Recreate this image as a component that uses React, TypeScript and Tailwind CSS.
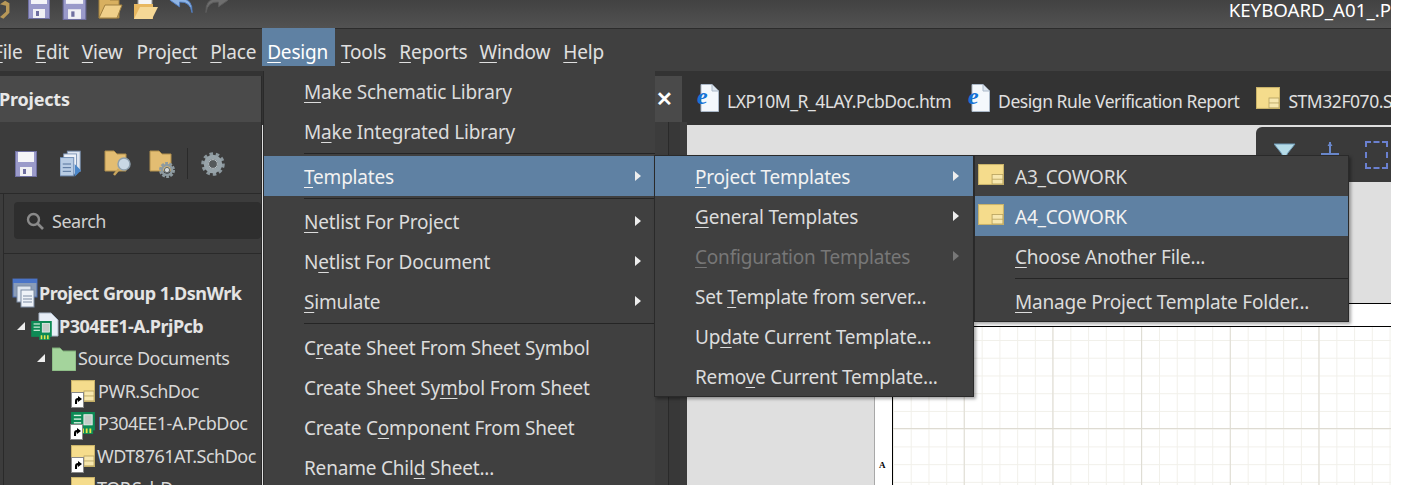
import React from 'react';

const FONT = "font-['Noto_Sans','Noto_Sans_CJK_KR',sans-serif]";

const Floppy = ({ className = '' }: { className?: string }) => (
  <svg viewBox="0 0 22 26" className={className}>
    <rect x="0.5" y="0.5" width="21" height="25" fill="#9a9aca" stroke="#6f6fa0" />
    <rect x="3" y="1" width="16" height="10" fill="#f4f4f8" />
    <rect x="5" y="16" width="12" height="9" fill="#f0f0f4" />
    <rect x="8" y="18" width="3" height="5" fill="#6f6fa0" />
  </svg>
);

const SheetIcon = ({ shortcut = false, size = 'w-[24px] h-[22px]' }: { shortcut?: boolean; size?: string }) => (
  <span className={`relative inline-block shrink-0 ${size}`}>
    <svg viewBox="0 0 24 20" preserveAspectRatio="none" className="w-full h-full">
      <rect x="0.5" y="0.5" width="23" height="19" fill="#f5dc8c" stroke="#c9b36a" />
      <rect x="13" y="10" width="10" height="9" fill="#f7e7ae" stroke="#b8a35f" strokeWidth="0.8" />
      <line x1="13" y1="14.5" x2="23" y2="14.5" stroke="#b8a35f" strokeWidth="0.8" />
    </svg>
    {shortcut && <ShortcutBadge />}
  </span>
);

const ShortcutBadge = () => (
  <span className="absolute left-0 bottom-[-6px] w-[13px] h-[16px] bg-white border border-[#888] flex items-center justify-center">
    <svg viewBox="0 0 10 10" className="w-[10px] h-[10px]">
      <path d="M2 9 L2 6 Q2 3 5 3 L5 1 L9 4 L5 7 L5 5 Q4 5 4 9 Z" fill="#000" />
    </svg>
  </span>
);

const PcbChip = ({ className = '' }: { className?: string }) => (
  <svg viewBox="0 0 26 24" className={className}>
    <rect x="0" y="0" width="26" height="20" fill="#0d8a55" />
    <rect x="3" y="3" width="8" height="1.5" fill="#d8f0e0" />
    <rect x="3" y="7" width="8" height="1.5" fill="#d8f0e0" />
    <rect x="3" y="11" width="8" height="1.5" fill="#d8f0e0" />
    <rect x="14" y="3" width="9" height="11" fill="#c4ccc8" stroke="#e8f0ec" />
    <rect x="10" y="16" width="14" height="8" fill="#0d8a55" />
    <rect x="12" y="18" width="2" height="5" fill="#e6e64a" />
    <rect x="16" y="18" width="2" height="5" fill="#e6e64a" />
    <rect x="20" y="18" width="2" height="5" fill="#e6e64a" />
  </svg>
);

const IeIcon = () => (
  <span className="relative inline-block w-[22px] h-[28px] shrink-0">
    <svg viewBox="0 0 22 28" className="w-full h-full">
      <path d="M4 0.5 H15 L21.5 7 V27.5 H4 Z" fill="#f4f8fc" stroke="#aab8c8" />
      <path d="M15 0.5 V7 H21.5" fill="#dde6f0" stroke="#aab8c8" />
    </svg>
    <span className="absolute left-0 top-[1px] text-[#1573d6] text-[24px] leading-[22px] font-bold font-['Liberation_Serif',serif] italic">e</span>
  </span>
);

const FolderIcon = ({ glass, gear }: { glass?: boolean; gear?: boolean }) => (
  <svg viewBox="0 0 28 30" className="w-[28px] h-[30px]">
    <path d="M1 2 H10 L13 5 H22 V22 H1 Z" fill="#e3bd72" stroke="#b08f4c" />
    {glass && (
      <>
        <circle cx="20" cy="15" r="6" fill="#c9d8e4" stroke="#8ea0ae" strokeWidth="1.5" />
        <line x1="15" y1="20" x2="10" y2="26" stroke="#c9a55c" strokeWidth="2.5" />
      </>
    )}
    {gear && (
      <>
        <circle cx="18" cy="21" r="6" fill="none" stroke="#8d9aa0" strokeWidth="4" strokeDasharray="2.5 1.2" />
        <circle cx="18" cy="21" r="5" fill="none" stroke="#8d9aa0" strokeWidth="2.5" />
        <circle cx="18" cy="21" r="2.6" fill="#d4d8d8" stroke="#5f686c" />
      </>
    )}
  </svg>
);

const Gear = () => (
  <svg viewBox="0 0 24 24" className="w-[24px] h-[24px]">
    <circle cx="12" cy="12" r="10" fill="none" stroke="#8c989e" strokeWidth="3.5" strokeDasharray="3.4 2.8" />
    <circle cx="12" cy="12" r="7" fill="none" stroke="#97a3a9" strokeWidth="4.5" />
    <circle cx="12" cy="12" r="4.4" fill="#55595b" stroke="#b8c0c4" />
  </svg>
);

const Caret = () => (
  <svg viewBox="0 0 8 8" className="w-[8px] h-[8px] shrink-0">
    <path d="M8 0 V8 H0 Z" fill="#eee" />
  </svg>
);

type Item = {
  label: React.ReactNode;
  arrow?: boolean;
  active?: boolean;
  disabled?: boolean;
  icon?: boolean;
};

const Sep = ({ left }: { left: string }) => (
  <div className={`h-[5px] flex items-center ${left}`}>
    <div className="h-px w-full bg-[#252525]" />
  </div>
);

const MenuRow = ({ item, pad }: { item: Item; pad: string }) => (
  <div
    className={`relative h-[40px] flex items-center whitespace-nowrap pt-[2px] ${pad} ${
      item.active ? 'bg-[#5f81a3] text-[#f2f2f2]' : item.disabled ? 'text-[#777]' : 'text-[#dcdcdc]'
    }`}
  >
    {item.icon && (
      <span className="absolute left-[3px] top-[8px] flex">
        <SheetIcon size="w-[26px] h-[21px]" />
      </span>
    )}
    <span>{item.label}</span>
    {item.arrow && (
      <span className={`absolute right-[14px] top-[15px] w-0 h-0 border-y-[5px] border-y-transparent border-l-[6px] ${item.disabled ? 'border-l-[#777]' : 'border-l-[#eee]'}`} />
    )}
  </div>
);

const TreeRow = ({ indent, children, bold }: { indent: string; children: React.ReactNode; bold?: boolean }) => (
  <div className={`h-[32.5px] flex items-center whitespace-nowrap ${indent} ${bold ? 'font-bold text-[#e4e4e4]' : 'text-[#d8d8d8]'}`}>
    {children}
  </div>
);

const DocTab = ({ icon, label }: { icon: React.ReactNode; label: string }) => (
  <div className="flex items-center gap-[8px] whitespace-nowrap text-[#e0e0e0]">
    {icon}
    <span className="pt-[5px]">{label}</span>
  </div>
);

const u = (s: string) => <u className="underline underline-offset-[3px] decoration-1">{s}</u>;

export default function App() {
  return (
    <div className={`relative w-[1408px] h-[485px] overflow-hidden bg-white text-[19px] tracking-[-0.2px] leading-[26px] ${FONT}`}>
      <div className="w-[1391px] h-[485px] flex flex-col overflow-hidden bg-[#3c3c3c]">
        {/* title bar */}
        <div className="h-[29px] shrink-0 flex items-start justify-between bg-[linear-gradient(#424242,#525252)] border-b border-[#2c2c2c] overflow-hidden">
          <div className="relative flex items-end -mt-[8px] pl-[28px]">
            <Floppy className="w-[22px] h-[28px]" />
            <Floppy className="w-[25px] h-[28px] ml-[12px]" />
            <svg viewBox="0 0 26 28" className="w-[26px] h-[28px] ml-[10px]">
              <path d="M2 4 H10 L13 8 H22 V26 H2 Z" fill="#d8b060" stroke="#a08040" />
              <path d="M2 26 L8 13 H25 L20 26 Z" fill="#f0d08a" stroke="#a08040" />
            </svg>
            <svg viewBox="0 0 26 28" className="w-[26px] h-[28px] ml-[10px]">
              <rect x="5" y="0" width="14" height="20" fill="#f4f4f4" stroke="#999" />
              <path d="M1 12 H20 V27 H1 Z" fill="#e8b860" />
              <path d="M1 27 L7 15 H25 L19 27 Z" fill="#f5d896" />
            </svg>
            <svg viewBox="0 0 26 22" className="w-[25px] h-[22px] ml-[10px] mb-[5px]">
              <path d="M24 20 Q22 8 11 9 V14 L1 7 L11 0 V5 Q25 5 24 20 Z" fill="#8eb4e4" stroke="#4f7cc0" />
            </svg>
            <svg viewBox="0 0 26 22" className="w-[25px] h-[22px] ml-[10px] mb-[5px]">
              <path d="M2 20 Q4 8 15 9 V14 L25 7 L15 0 V5 Q1 5 2 20 Z" fill="#6e6e6e" stroke="#5c5c5c" />
            </svg>
            <svg viewBox="0 0 14 24" className="absolute left-0 top-[8px] w-[12px] h-[22px]">
              <path d="M0 4 L6 0 L11 3 V14 L4 21 L0 19 L7 13 V6 Z" fill="#b89858" />
            </svg>
          </div>
          <span className="text-white whitespace-nowrap leading-[20px] text-[18.7px] tracking-normal">KEYBOARD_A01_.P</span>
        </div>

        {/* menu bar */}
        <div className="h-[42px] shrink-0 flex items-start pt-px bg-[#404040] text-[#e0e0e0] whitespace-nowrap">
          <div className="-ml-[7px] flex items-center h-[38px] gap-[13px] pt-[5px]">
            <span>{u('F')}ile</span>
            <span>{u('E')}dit</span>
            <span>{u('V')}iew</span>
            <span className="ml-px">Proje{u('c')}t</span>
            <span>{u('P')}lace</span>
            <span className="relative -ml-[2px]">
              <span className="absolute -left-[5px] -right-[7px] -top-[11px] h-[38px] bg-[#5f81a3]" />
              <span className="relative text-white">{u('D')}esign</span>
            </span>
            <span>{u('T')}ools</span>
            <span>{u('R')}eports</span>
            <span className="-ml-px">{u('W')}indow</span>
            <span>{u('H')}elp</span>
          </div>
        </div>

        {/* work area */}
        <div className="flex-1 flex min-h-0 bg-[#333]">
          <div className="w-[262px] shrink-0 flex flex-col mt-[5px] border-r border-[#2a2a2a] bg-[#3c3c3c]">
            <div className="h-[46px] shrink-0 bg-[#4a4a4a] flex items-center font-bold text-[18px] text-[#e8e8e8] -indent-px">Projects</div>
            <div className="h-[72px] shrink-0 flex items-center pl-[15px] pt-[12px] border-b border-[#2a2a2a]">
              <Floppy className="w-[22px] h-[26px]" />
              <svg viewBox="0 0 24 28" className="w-[22px] h-[28px] ml-[23px]">
                <rect x="8" y="0" width="14" height="22" fill="#dfe6f0" stroke="#7c93b4" />
                <rect x="4" y="3" width="14" height="22" fill="#eef2f8" stroke="#7c93b4" />
                <rect x="0" y="7" width="15" height="20" fill="#b8cce4" stroke="#6a88b0" />
                <path d="M3 14 H12 M3 18 H12 M3 22 H12" stroke="#4a6a94" />
                <path d="M16 14 L23 21 L16 28 Z" fill="#4a86c8" />
              </svg>
              <div className="ml-[22px] flex">
                <FolderIcon glass />
              </div>
              <div className="ml-[17px] flex">
                <FolderIcon gear />
              </div>
              <div className="h-[31px] w-px bg-[#2a2a2a] ml-[10px]" />
              <div className="ml-[13px] flex">
                <Gear />
              </div>
            </div>
            <div className="flex-1 ml-[3px] border-l border-[#2a2a2a]">
              <div className="h-[60px] border-b border-[#2a2a2a] pl-[10px] pt-[8px]">
                <div className="h-[37px] rounded-[4px] bg-[#2e2e2e] flex items-center pl-[12px] gap-[8px] text-[#cfcfcf] text-[18px] tracking-[-0.5px]">
                  <svg viewBox="0 0 18 18" className="w-[18px] h-[18px]">
                    <circle cx="7.5" cy="7.5" r="5.5" fill="none" stroke="#8a8a8a" strokeWidth="2.4" />
                    <line x1="11.5" y1="11.5" x2="17" y2="17" stroke="#8a8a8a" strokeWidth="2.6" />
                  </svg>
                  <span>Search</span>
                </div>
              </div>
              <div className="pt-[23px] text-[18px] tracking-[-0.5px]">
                <TreeRow indent="pl-[8px]" bold>
                  <svg viewBox="0 0 26 30" className="w-[26px] h-[30px] shrink-0">
                    <rect x="1" y="1" width="24" height="18" fill="#8a9cb8" stroke="#4a6ab0" />
                    <rect x="1" y="1" width="24" height="4" fill="#4a74c8" />
                    <rect x="5" y="8" width="14" height="16" fill="#dfe6f0" stroke="#7c8ca4" />
                    <rect x="9" y="12" width="13" height="17" fill="#eef2f8" stroke="#7c8ca4" />
                    <path d="M11 18 H20 M11 21 H20 M11 24 H20" stroke="#7c8ca4" />
                  </svg>
                  <span className="ml-px">Project Group 1.DsnWrk</span>
                </TreeRow>
                <TreeRow indent="pl-[13px]" bold>
                  <Caret />
                  <span className="relative w-[28px] h-[28px] ml-[6px] shrink-0">
                    <svg viewBox="0 0 28 28" className="w-full h-full">
                      <path d="M8 1 H20 L27 8 V24 H8 Z" fill="#e8eef6" stroke="#aab8c8" />
                    </svg>
                    <PcbChip className="absolute left-0 top-[9px] w-[21px] h-[19px]" />
                  </span>
                  <span>P304EE1-A.PrjPcb</span>
                </TreeRow>
                <TreeRow indent="pl-[33px]">
                  <Caret />
                  <svg viewBox="0 0 24 25" className="w-[24px] h-[25px] ml-[7px] shrink-0">
                    <path d="M0 2 H8 L11 5 H24 V25 H0 Z" fill="#a4d49c" stroke="#7aa874" />
                  </svg>
                  <span className="ml-[2px]">Source Documents</span>
                </TreeRow>
                <TreeRow indent="pl-[67px]">
                  <SheetIcon shortcut />
                  <span className="ml-[3px]">PWR.SchDoc</span>
                </TreeRow>
                <TreeRow indent="pl-[67px]">
                  <span className="relative w-[26px] h-[22px] shrink-0 -ml-px">
                    <PcbChip className="w-full h-full" />
                    <ShortcutBadge />
                  </span>
                  <span className="ml-[2px]">P304EE1-A.PcbDoc</span>
                </TreeRow>
                <TreeRow indent="pl-[67px]">
                  <SheetIcon shortcut />
                  <span className="ml-[2px]">WDT8761AT.SchDoc</span>
                </TreeRow>
                <TreeRow indent="pl-[67px]">
                  <SheetIcon />
                  <span className="ml-[2px]">TOP.SchDoc</span>
                </TreeRow>
              </div>
            </div>
          </div>

          {/* documents */}
          <div className="flex-1 min-w-0 flex flex-col">
            <div className="h-[54px] shrink-0 flex items-center gap-[17px] pl-[435px] overflow-hidden text-[17.5px] tracking-[-0.45px]">
              <DocTab icon={<IeIcon />} label="LXP10M_R_4LAY.PcbDoc.htm" />
              <DocTab icon={<IeIcon />} label="Design Rule Verification Report" />
              <DocTab icon={<SheetIcon size="w-[24px] h-[22px]" />} label="STM32F070.SchDoc" />
            </div>
            <div className="flex-1 min-h-0 bg-[#dfdfdf]" />
          </div>
        </div>
      </div>

      {/* close button of the tab strip */}
      <div className="absolute left-[655px] top-[76px] w-[27px] h-[46px] bg-[#4a4a4a] flex items-center justify-center pr-[9px]">
        <span className="text-white text-[20px] font-bold">✕</span>
      </div>
      <div className="absolute left-[655px] top-[122px] w-[32px] h-[363px] bg-[#3c3c3c] flex justify-center">
        <div className="w-[12px] h-full ml-[5px] bg-[#383838] border-l border-[#2a2a2a]" />
      </div>

      {/* filter toolbar over the document */}
      <div className="absolute left-[1256px] top-[127px] w-[135px] h-[55px] bg-[#3a3a3a] rounded-tl-[6px] flex items-start pl-[18px] pt-[16px]">
        <svg viewBox="0 0 22 22" className="w-[22px] h-[22px]">
          <path d="M0 1 H21 L13 11 V22 H8 V11 Z" fill="#b6dce8" stroke="#6f9cb8" />
        </svg>
        <svg viewBox="0 0 22 30" className="w-[22px] h-[30px] -mt-[1px] ml-[23px]">
          <path d="M11 0 V24 M2 12 H20" stroke="#6a88cc" strokeWidth="2" fill="none" />
          <path d="M11 0 L8.5 4 H13.5 Z" fill="#6a88cc" />
        </svg>
        <div className="w-[23px] h-[28px] -mt-[2px] ml-[24px] border-2 border-dashed border-[#6a80d0]" />
      </div>

      {/* schematic sheet */}
      <div className="absolute left-[874px] top-[303px] w-[517px] h-[182px] bg-white border-t border-l border-t-black border-l-[#a8a8a8]">
        <div className="absolute left-[17px] top-[22px] right-0 bottom-0 border-l border-t border-black bg-white bg-[linear-gradient(#dedbd2_1px,transparent_1px),linear-gradient(90deg,#dedbd2_1px,transparent_1px),linear-gradient(#f1f0ea_1px,transparent_1px),linear-gradient(90deg,#f1f0ea_1px,transparent_1px)] bg-[size:100%_177px,88.7px_100%,17.74px_17.74px,17.74px_17.74px] bg-[position:0_101px,-18px_0,0_13px,0_13px]" />
        <span className="absolute left-[4px] top-[155px] text-[9px] leading-[12px] text-black font-['Liberation_Serif',serif] font-bold">A</span>
      </div>

      {/* Design menu */}
      <div className="absolute left-[263px] top-[71px] w-[392px] h-[414px] bg-[#404040] border-l border-[#2a2a2a]">
        <MenuRow pad="pl-[40px]" item={{ label: <>{u('M')}ake Schematic Library</> }} />
        <MenuRow pad="pl-[40px]" item={{ label: <>M{u('a')}ke Integrated Library</> }} />
        <Sep left="ml-[40px]" />
        <MenuRow pad="pl-[40px]" item={{ label: <>{u('T')}emplates</>, arrow: true, active: true }} />
        <Sep left="ml-[40px]" />
        <MenuRow pad="pl-[40px]" item={{ label: <>{u('N')}etlist For Project</>, arrow: true }} />
        <MenuRow pad="pl-[40px]" item={{ label: <>N{u('e')}tlist For Document</>, arrow: true }} />
        <MenuRow pad="pl-[40px]" item={{ label: <>{u('S')}imulate</>, arrow: true }} />
        <Sep left="ml-[40px] mb-px" />
        <MenuRow pad="pl-[40px]" item={{ label: <>C{u('r')}eate Sheet From Sheet Symbol</> }} />
        <MenuRow pad="pl-[40px]" item={{ label: <>Create Sheet Sy{u('m')}bol From Sheet</> }} />
        <MenuRow pad="pl-[40px]" item={{ label: <>Create C{u('o')}mponent From Sheet</> }} />
        <MenuRow pad="pl-[40px]" item={{ label: <>Rename Chil{u('d')} Sheet...</> }} />
      </div>

      {/* Templates submenu */}
      <div className="absolute left-[654px] top-[155px] w-[320px] bg-[#404040] border border-[#2a2a2a] shadow-[2px_2px_3px_rgba(0,0,0,0.35)]">
        <MenuRow pad="pl-[40px]" item={{ label: <>{u('P')}roject Templates</>, arrow: true, active: true }} />
        <MenuRow pad="pl-[40px]" item={{ label: <>{u('G')}eneral Templates</>, arrow: true }} />
        <MenuRow pad="pl-[40px]" item={{ label: <>{u('C')}onfiguration Templates</>, arrow: true, disabled: true }} />
        <MenuRow pad="pl-[40px]" item={{ label: <>Set {u('T')}emplate from server...</> }} />
        <MenuRow pad="pl-[40px]" item={{ label: <>Up{u('d')}ate Current Template...</> }} />
        <MenuRow pad="pl-[40px]" item={{ label: <>Remo{u('v')}e Current Template...</> }} />
      </div>

      {/* Project Templates submenu */}
      <div className="absolute left-[974px] top-[155px] w-[375px] bg-[#404040] border border-[#2a2a2a] shadow-[2px_2px_3px_rgba(0,0,0,0.35)]">
        <MenuRow pad="pl-[40px]" item={{ label: 'A3_COWORK', icon: true }} />
        <MenuRow pad="pl-[40px]" item={{ label: 'A4_COWORK', icon: true, active: true }} />
        <MenuRow pad="pl-[40px]" item={{ label: <>{u('C')}hoose Another File...</> }} />
        <Sep left="ml-[40px]" />
        <MenuRow pad="pl-[40px]" item={{ label: <>{u('M')}anage Project Template Folder...</> }} />
      </div>
    </div>
  );
}
